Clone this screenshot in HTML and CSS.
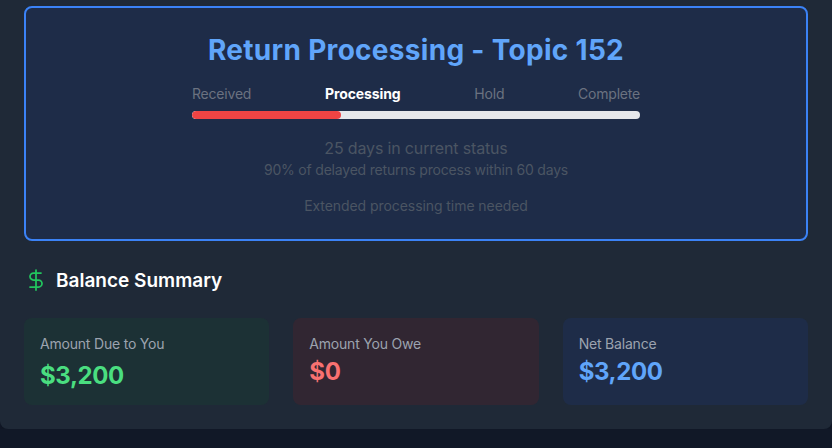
FILE: index.html
```html
<!DOCTYPE html>
<html lang="en">
<head>
    <meta charset="UTF-8">
    <meta name="viewport" content="width=device-width, initial-scale=1.0">
    <title>Return Status</title>
    <link rel="stylesheet" href="styles.css">
</head>
<body>
    <div class="panel">
        <!-- Status Box -->
        <div class="status-box">
            <h1>Return Processing - Topic 152</h1>
            <div class="steps">
                <div class="step-labels">
                    <span>Received</span>
                    <span class="active">Processing</span>
                    <span>Hold</span>
                    <span>Complete</span>
                </div>
                <div class="track"><div class="track-fill"></div></div>
            </div>
            <p class="days">25 days in current status</p>
            <p class="note">90% of delayed returns process within 60 days</p>
            <p class="extended">Extended processing time needed</p>
        </div>
        <!-- Balance Summary -->
        <div class="summary-head">
            <svg class="summary-icon" width="24" height="24" viewBox="0 0 24 24" fill="none" stroke="currentColor" stroke-width="1.75" stroke-linecap="round" stroke-linejoin="round">
                <line x1="12" y1="2" x2="12" y2="22"></line>
                <path d="M17 5H9.5a3.5 3.5 0 0 0 0 7h5a3.5 3.5 0 0 1 0 7H6"></path>
            </svg>
            <h2>Balance Summary</h2>
        </div>
        <div class="cards">
            <div class="card card-green">
                <p class="card-label">Amount Due to You</p>
                <p class="card-value value-spaced">$3,200</p>
            </div>
            <div class="card card-red">
                <p class="card-label">Amount You Owe</p>
                <p class="card-value">$0</p>
            </div>
            <div class="card card-blue">
                <p class="card-label">Net Balance</p>
                <p class="card-value">$3,200</p>
            </div>
        </div>
    </div>
</body>
</html>
```

FILE: styles.css
```css
body {
    font-family: 'Inter', sans-serif;
    margin: 0;
    padding: 0;
    background-color: #111827;
}
p, h1, h2 {
    margin: 0;
}
/* Outer Panel */
.panel {
    background: #1f2937;
    padding: 6px 24px 24px;
    border-radius: 0 0 8px 8px;
    box-shadow: 0 4px 6px rgba(0, 0, 0, 0.1);
}
/* Status Box */
.status-box {
    background: rgba(30, 58, 138, 0.2);
    border: 2px solid #3b82f6;
    border-radius: 8px;
    padding: 24px;
    height: 235px;
    box-sizing: border-box;
    text-align: center;
}
.status-box h1 {
    font-size: 28px;
    line-height: 36px;
    letter-spacing: 0.3px;
    font-weight: 700;
    color: #60a5fa;
    margin-bottom: 16px;
}
.steps {
    width: 448px;
    margin: 0 auto 17px;
}
.step-labels {
    display: flex;
    justify-content: space-between;
    font-size: 14px;
    line-height: 20px;
    letter-spacing: -0.2px;
    color: #6b7280;
    margin-bottom: 7px;
}
.step-labels .active {
    color: #fff;
    font-weight: 700;
    letter-spacing: -0.1px;
}
.track {
    height: 8px;
    background: #e5e7eb;
    border-radius: 4px;
    overflow: hidden;
}
.track-fill {
    width: 33.33%;
    height: 100%;
    background: #ef4444;
    border-radius: 4px;
}
.days {
    font-size: 16px;
    line-height: 24px;
    letter-spacing: -0.16px;
    color: #4b5563;
}
.note, .extended {
    font-size: 14px;
    line-height: 20px;
    color: #4b5563;
}
.note {
    letter-spacing: -0.2px;
}
.extended {
    letter-spacing: -0.07px;
    margin-top: 16px;
}
/* Balance Summary */
.summary-head {
    display: flex;
    align-items: center;
    gap: 8px;
    margin: 24px 0 23px;
}
.summary-icon {
    color: #22c55e;
}
.summary-head h2 {
    font-size: 19px;
    line-height: 28px;
    padding-top: 2px;
    font-weight: 600;
    color: #fff;
}
.cards {
    display: grid;
    grid-template-columns: repeat(3, 1fr);
    gap: 24px;
}
.card {
    height: 87px;
    padding: 16px;
    box-sizing: border-box;
    border-radius: 8px;
}
.card-green {
    background: rgba(20, 83, 45, 0.2);
}
.card-red {
    background: rgba(127, 29, 29, 0.2);
}
.card-blue {
    background: rgba(30, 58, 138, 0.2);
}
.card-label {
    font-size: 14px;
    line-height: 20px;
    letter-spacing: -0.2px;
    color: #9ca3af;
}
.card-value {
    font-size: 24px;
    line-height: 32px;
    letter-spacing: -0.4px;
    font-weight: 700;
    margin-top: 2px;
}
.card-value.value-spaced {
    margin-top: 6px;
}
.card-green .card-value {
    color: #4ade80;
}
.card-red .card-value {
    color: #f87171;
}
.card-blue .card-value {
    color: #60a5fa;
}
```
